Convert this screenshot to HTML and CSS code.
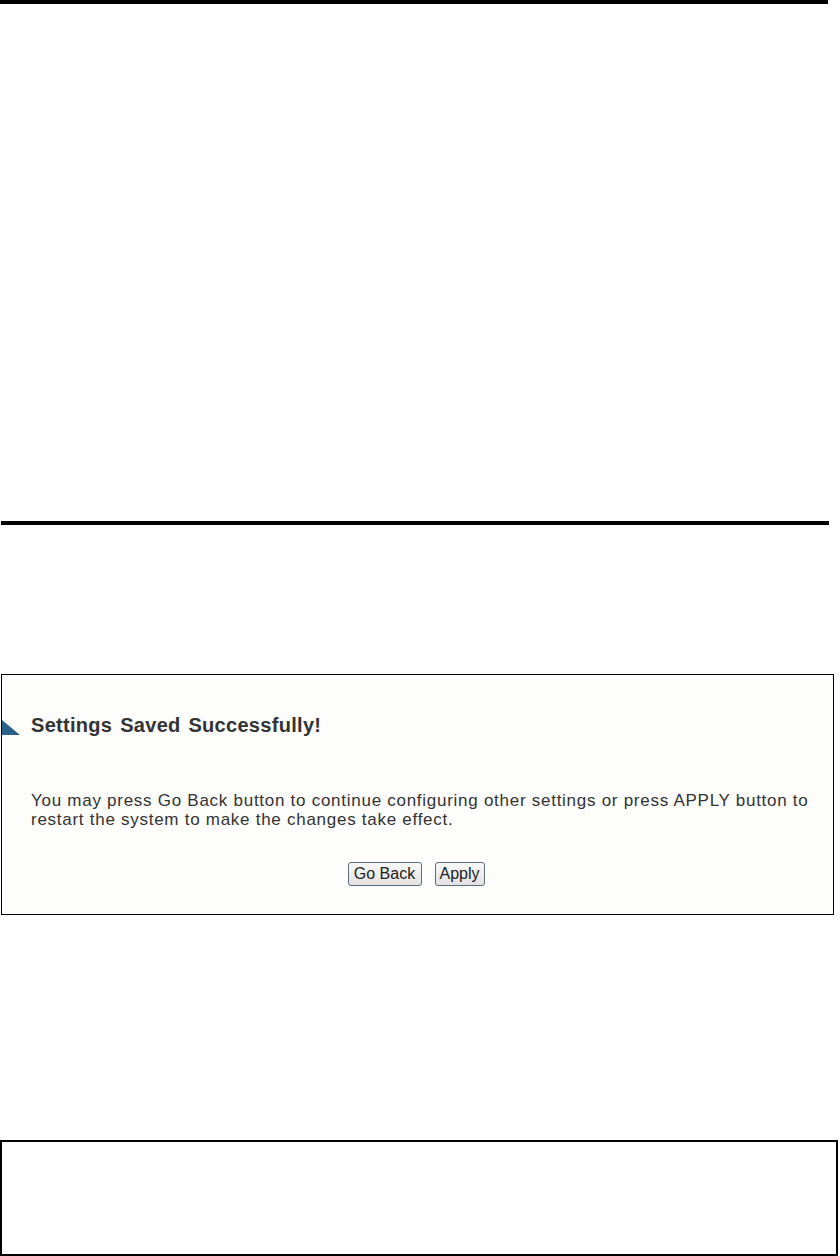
FILE: index.html
```html
<!DOCTYPE html>
<html>
<head>
<meta charset="utf-8">
<link rel="stylesheet" href="styles.css">
</head>
<body>
<div class="page">
  <div class="rule rule-top"></div>
  <div class="rule rule-mid"></div>
  <div class="shot">
    <div class="heading">
      <span class="tri"></span>
      <h1>Settings Saved Successfully!</h1>
    </div>
    <p class="msg">You may press Go Back button to continue configuring other settings or press APPLY button to restart the system to make the changes take effect.</p>
    <div class="buttons">
      <button class="btn btn-back">Go Back</button>
      <button class="btn btn-apply">Apply</button>
    </div>
  </div>
  <div class="note"></div>
</div>
</body>
</html>
```
FILE: styles.css
```css
html, body {
  margin: 0;
  padding: 0;
  background: #fff;
}
.page {
  width: 840px;
  height: 1256px;
  overflow: hidden;
  font-family: "Liberation Sans", Arial, sans-serif;
}
.rule {
  background: #000;
  width: 828px;
  height: 4px;
}
.rule-mid {
  margin-top: 517px;
  margin-left: 1px;
}
.shot {
  margin-top: 149px;
  margin-left: 1px;
  width: 833px;
  height: 241px;
  border: 1px solid #000;
  background: #fdfdfc;
  box-sizing: border-box;
}
.heading {
  display: flex;
  align-items: center;
  margin-top: 35px;
  height: 30px;
}
.tri {
  width: 0;
  height: 0;
  border-left: 18px solid #2d6189;
  border-top: 15px solid transparent;
  margin-top: 5px;
}
.heading h1 {
  margin: 0 0 0 11px;
  font-size: 20px;
  font-weight: bold;
  color: #333;
  letter-spacing: 0.3px;
  word-spacing: 2px;
  line-height: 30px;
}
.msg {
  margin: 51px 0 0 29px;
  width: 796px;
  font-size: 17px;
  line-height: 19px;
  letter-spacing: 0.73px;
  color: #333;
}
.buttons {
  display: flex;
  justify-content: center;
  gap: 13px;
  margin-top: 33px;
  padding-right: 3px;
}
.btn {
  font-family: "Liberation Sans", Arial, sans-serif;
  font-size: 16px;
  color: #222;
  background: linear-gradient(#f9f9f9, #e2e2e2);
  border: 1px solid #5b6d7e;
  border-radius: 3px;
  height: 24px;
  padding: 0;
  line-height: 22px;
}
.btn-back {
  width: 74px;
}
.btn-apply {
  width: 50px;
}
.note {
  margin-top: 225px;
  width: 838px;
  height: 116px;
  border: 2px solid #000;
  box-sizing: border-box;
}
```
